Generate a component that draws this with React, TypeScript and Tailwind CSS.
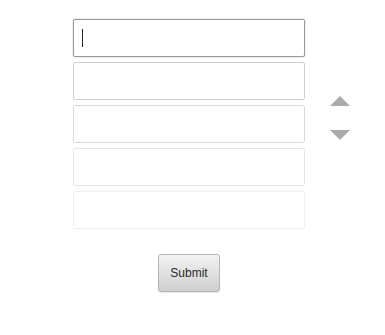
import { useEffect, useRef } from "react";

const borders = [
  "border-[#9a9a9a] shadow-[0_0_2px_rgba(0,0,0,0.25)]",
  "border-[#cfcfcf]",
  "border-[#d9d9d9]",
  "border-[#e4e4e4]",
  "border-[#efefef] bg-[#fdfdfd]",
];

export default function App() {
  const firstRef = useRef<HTMLInputElement>(null);

  useEffect(() => {
    firstRef.current?.focus();
  }, []);

  return (
    <div className="w-[385px] h-[335px] bg-white flex font-['Liberation_Sans',Arial,sans-serif]">
      <div className="ml-[73px] mt-[19px] w-[232px] flex flex-col">
        {borders.map((b, i) => (
          <div key={i} className="relative mb-[5px]">
            <input
              ref={i === 0 ? firstRef : undefined}
              type="text"
              className={`block h-[38px] w-full rounded-[2px] border bg-white px-[8px] text-[16px] text-[#222] outline-none caret-transparent ${b}`}
            />
            {i === 0 && (
              <span className="absolute left-[9px] top-[10px] h-[18px] w-px bg-[#222]" />
            )}
          </div>
        ))}
        <div className="flex justify-center mt-[20px]">
          <button className="w-[62px] h-[38px] rounded-[3px] border border-[#b5b5b5] bg-gradient-to-b from-[#f3f3f3] to-[#cfcfcf] text-[12px] text-[#2a2a2a] shadow-[0_1px_1px_rgba(0,0,0,0.1)]">
            Submit
          </button>
        </div>
      </div>
      <div className="ml-[25px] mt-[96px] flex flex-col items-start gap-[24px]">
        <svg width="20" height="10" viewBox="0 0 20 10">
          <polygon points="10,0 20,10 0,10" fill="#ababab" />
        </svg>
        <svg width="20" height="10" viewBox="0 0 20 10">
          <polygon points="0,0 20,0 10,10" fill="#ababab" />
        </svg>
      </div>
    </div>
  );
}
